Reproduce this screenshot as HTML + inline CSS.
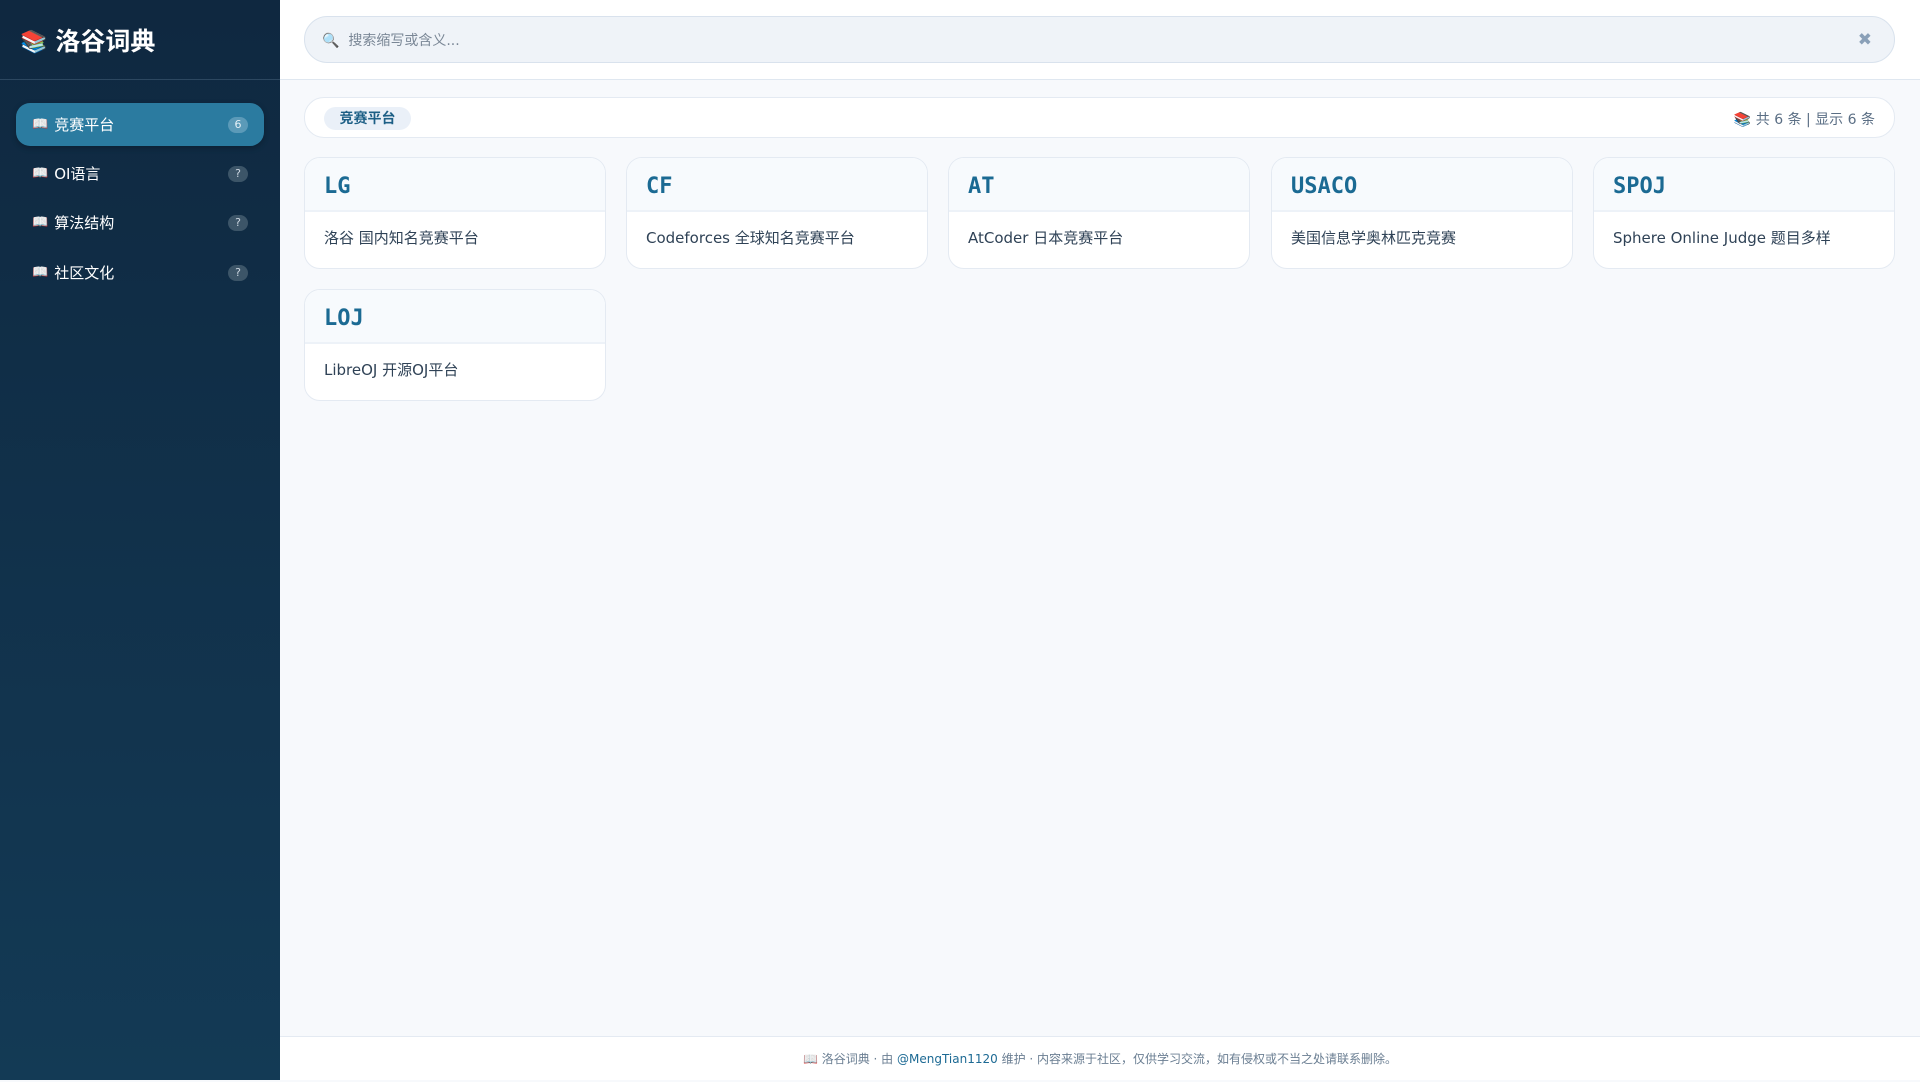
<!DOCTYPE html>
<html><head><meta charset="utf-8"><style>
*{box-sizing:border-box;margin:0;padding:0}
body{width:1920px;height:1080px;overflow:hidden;font-family:"DejaVu Sans","Liberation Sans","Noto Sans CJK SC",sans-serif;background:#f7f9fc;position:relative}
.side{position:absolute;left:0;top:0;width:280px;height:1080px;background:linear-gradient(180deg,#0f2840 0%,#133a55 100%)}
.logo{height:80px;border-bottom:1px solid #2c4760;display:flex;align-items:center;padding-left:20px;color:#fff;font-weight:bold;font-size:25px;font-family:"Noto Sans CJK SC",sans-serif}
.logo span{font-size:22px;margin-right:8px}
.nav{position:absolute;left:16px;width:248px;height:43px;border-radius:14px;display:flex;align-items:center;padding-left:16px;color:#fff;font-size:15px}
.nav.act{background:#2b7ba0;box-shadow:0 2px 6px rgba(0,0,0,.25)}
.nav i{font-style:normal;font-size:13px;margin-right:6px}
.nav b{position:absolute;right:16px;top:50%;transform:translateY(-50%);font-weight:normal;font-size:11px;width:20px;height:16px;border-radius:8px;background:#3c5568;color:#ccd6e0;text-align:center;line-height:16px}
.nav.act b{background:#5b9ab8;color:#e6f0f6}
.top{position:absolute;left:280px;top:0;right:0;height:80px;background:#fff;border-bottom:1px solid #dfe7f0}
.search{position:absolute;left:24px;top:16px;width:1591px;height:47px;border-radius:24px;background:#eff3f8;border:1px solid #d9e2ed;display:flex;align-items:center;padding-left:17px;color:#7a8796;font-size:14px}
.search .x{position:absolute;right:22px;color:#8aa0b8;font-size:17px;font-weight:bold}
.bar{position:absolute;left:304px;top:97px;width:1591px;height:41px;background:#fff;border:1px solid #e4eaf2;border-radius:20px}
.chip{position:absolute;left:19px;top:9px;width:87px;height:23px;border-radius:12px;background:#eaf0f8;color:#1d5f86;font-weight:bold;font-size:14px;text-align:center;line-height:23px;font-family:"Noto Sans CJK SC",sans-serif}
.cnt{position:absolute;right:19px;top:11px;font-size:14px;color:#5a6e84}
.card{position:absolute;width:302px;height:112px;background:#fff;border:1px solid #e4eaf2;border-radius:16px;overflow:hidden}
.card .h{height:54px;background:#f7fafd;border-bottom:2px solid #edf2f8;padding:18px 19px 0;font-family:"DejaVu Sans Mono","Liberation Mono",monospace;font-weight:bold;font-size:22px;line-height:22px;color:#1b6a93}
.card .d{padding:15px 19px;font-size:15px;color:#2f4256}
.foot{position:absolute;left:280px;right:0;top:1036px;bottom:0;background:#fff;border-top:1px solid #e4eaf2;text-align:center;font-size:12px;color:#6a7e92;line-height:45px}
.foot a{color:#1d6a94}
</style></head><body>
<div class="side">
<div class="logo"><span>📚</span>洛谷词典</div>
<div class="nav act" style="top:103px"><i>📖</i>竞赛平台<b>6</b></div>
<div class="nav" style="top:152px"><i>📖</i>OI语言<b>?</b></div>
<div class="nav" style="top:201px"><i>📖</i>算法结构<b>?</b></div>
<div class="nav" style="top:251px"><i>📖</i>社区文化<b>?</b></div>
</div>
<div class="top"><div class="search">🔍&nbsp; 搜索缩写或含义...<span class="x">✖</span></div></div>
<div class="bar"><div class="chip">竞赛平台</div><div class="cnt">📚 共 6 条 | 显示 6 条</div></div>
<div class="card" style="left:304px;top:157px"><div class="h">LG</div><div class="d">洛谷 国内知名竞赛平台</div></div>
<div class="card" style="left:626px;top:157px"><div class="h">CF</div><div class="d">Codeforces 全球知名竞赛平台</div></div>
<div class="card" style="left:948px;top:157px"><div class="h">AT</div><div class="d">AtCoder 日本竞赛平台</div></div>
<div class="card" style="left:1271px;top:157px"><div class="h">USACO</div><div class="d">美国信息学奥林匹克竞赛</div></div>
<div class="card" style="left:1593px;top:157px"><div class="h">SPOJ</div><div class="d">Sphere Online Judge 题目多样</div></div>
<div class="card" style="left:304px;top:289px"><div class="h">LOJ</div><div class="d">LibreOJ 开源OJ平台</div></div>
<div class="foot">📖 洛谷词典 · 由 <a>@MengTian1120</a> 维护 · 内容来源于社区，仅供学习交流，如有侵权或不当之处请联系删除。</div>
</body></html>
